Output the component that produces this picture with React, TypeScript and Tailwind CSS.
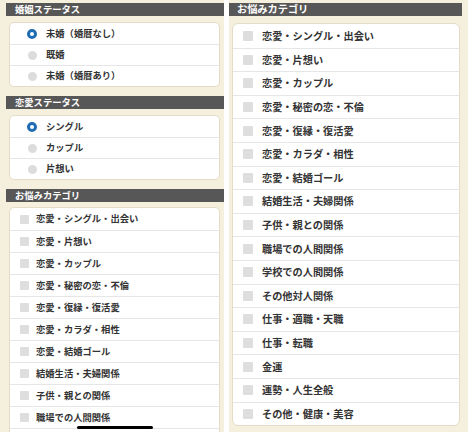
import React from 'react';

const font = { fontFamily: '"Noto Sans CJK JP", "Noto Sans", sans-serif' };

const marital = ['未婚（婚暦なし）', '既婚', '未婚（婚暦あり）'];
const love = ['シングル', 'カップル', '片想い'];
const categories = [
  '恋愛・シングル・出会い',
  '恋愛・片想い',
  '恋愛・カップル',
  '恋愛・秘密の恋・不倫',
  '恋愛・復縁・復活愛',
  '恋愛・カラダ・相性',
  '恋愛・結婚ゴール',
  '結婚生活・夫婦関係',
  '子供・親との関係',
  '職場での人間関係',
  '学校での人間関係',
  'その他対人関係',
  '仕事・適職・天職',
  '仕事・転職',
  '金運',
  '運勢・人生全般',
  'その他・健康・美容',
];

const Radio = ({ on }: { on: boolean }) =>
  on ? (
    <span className="w-[10px] h-[10px] rounded-full border-[3px] border-[#1f6cb3] bg-white shrink-0" />
  ) : (
    <span className="w-[9px] h-[9px] rounded-full bg-[#dcdcdc] shrink-0" />
  );

const LeftHeader = ({ title }: { title: string }) => (
  <div className="shrink-0 ml-[6px] h-[13px] bg-[#575757] flex items-center pl-[9px] text-white text-[9.3px] font-bold leading-none">
    {title}
  </div>
);

const LeftRadioCard = ({ items }: { items: string[] }) => (
  <div className="shrink-0 ml-[9px] mr-[4px] bg-white border border-[#e4dcc6] rounded-[5px] overflow-hidden">
    {items.map((t, i) => (
      <div key={t} className={`h-[21px] flex items-center ${i > 0 ? 'border-t border-[#e6e6e6]' : ''}`}>
        <span className="w-[27px] flex justify-end">
          <Radio on={i === 0} />
        </span>
        <span className="ml-[9px] text-[9.3px] font-bold text-[#333] leading-none">{t}</span>
      </div>
    ))}
  </div>
);

export default function App() {
  return (
    <div className="w-[468px] h-[432px] overflow-hidden flex bg-white relative" style={font}>
      {/* left screen */}
      <div className="w-[224px] h-full bg-[#f5efdd] flex flex-col pt-[3px] overflow-hidden">
        <LeftHeader title="婚姻ステータス" />
        <div className="h-[6px] shrink-0" />
        <LeftRadioCard items={marital} />
        <div className="h-[9px] shrink-0" />
        <LeftHeader title="恋愛ステータス" />
        <div className="h-[6px] shrink-0" />
        <LeftRadioCard items={love} />
        <div className="h-[9px] shrink-0" />
        <LeftHeader title="お悩みカテゴリ" />
        <div className="h-[5px] shrink-0" />
        <div className="shrink-0 ml-[9px] mr-[4px] bg-white border border-[#e4dcc6] rounded-t-[5px] overflow-hidden">
          {categories.slice(0, 10).map((t, i) => (
            <div key={t} className={`h-[22px] flex items-center ${i > 0 ? 'border-t border-[#e6e6e6]' : ''}`}>
              <span className="ml-[10px] w-[9px] h-[9px] bg-[#dedede] rounded-[1px] shrink-0" />
              <span className="ml-[7px] text-[9.3px] font-bold text-[#333] leading-none">{t}</span>
            </div>
          ))}
          <div className="h-[22px] border-t border-[#e6e6e6]" />
        </div>
      </div>
      <div className="w-[5px]" />
      {/* right screen */}
      <div className="flex-1 h-full bg-[#f5efdd] flex flex-col pt-[3px] overflow-hidden">
        <div className="shrink-0 mr-[6px] h-[13px] bg-[#575757] flex items-center pl-[8px] text-white text-[10.2px] font-bold leading-none">
          お悩みカテゴリ
        </div>
        <div className="h-[7px] shrink-0" />
        <div className="shrink-0 ml-[3px] mr-[8px] bg-white border border-[#e4dcc6] rounded-[6px] overflow-hidden">
          {categories.map((t, i) => (
            <div key={t} className={`h-[23.6px] flex items-center ${i > 0 ? 'border-t border-[#e6e6e6]' : ''}`}>
              <span className="ml-[10px] w-[10px] h-[10px] bg-[#dedede] rounded-[1px] shrink-0" />
              <span className="ml-[9px] text-[10.2px] font-bold text-[#333] leading-none">{t}</span>
            </div>
          ))}
        </div>
      </div>
      {/* home indicator */}
      <div className="absolute left-[77px] top-[426px] w-[76px] h-[3px] rounded-full bg-black" />
    </div>
  );
}
